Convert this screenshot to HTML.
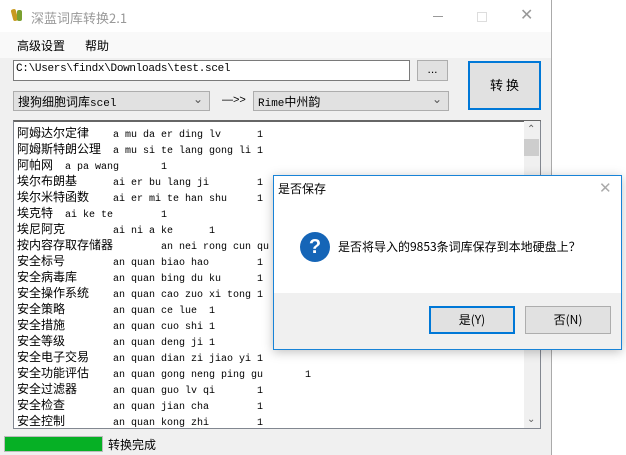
<!DOCTYPE html>
<html><head><meta charset="utf-8">
<style>
*{margin:0;padding:0;box-sizing:border-box}
body{width:626px;height:455px;position:relative;background:#fff;overflow:hidden;font-family:"Liberation Sans","Noto Sans CJK SC",sans-serif;font-size:12px;color:#000}
.win{position:absolute;left:0;top:0;width:552px;height:455px;background:#f0f0f0;border-right:1px solid #aaa}
.title{position:absolute;left:0;top:0;width:551px;height:32px;background:#fff}
.menu{position:absolute;left:0;top:32px;width:551px;height:26px;background:#f9f9f9}
.abs{position:absolute}
.cj{font-family:"Noto Sans CJK SC",sans-serif}
.clip{position:absolute;left:14px;top:122px;width:510px;height:306px;overflow:hidden}
.ln{position:absolute;left:3px;height:16px;font-family:"Liberation Mono",monospace;font-size:10px;line-height:16px;tab-size:8;-moz-tab-size:8;white-space:pre;margin-top:2px}
.ln b{font-weight:normal;font-family:"Noto Sans CJK SC",sans-serif;font-size:12px;line-height:12px}
</style></head><body>
<div class="win">
 <div class="title">
  <div class="abs" style="left:12px;top:9px;width:5px;height:12px;background:#c89a20;border-radius:2px;transform:rotate(-15deg)"></div>
  <div class="abs" style="left:17px;top:10px;width:5px;height:11px;background:#7aa030;border-radius:2px"></div>
  <div class="abs cj" style="left:31px;top:8px;font-size:13px;color:#999">深蓝词库转换2.1</div>
  <div class="abs" style="left:433px;top:16px;width:10px;height:1px;background:#999"></div>
  <div class="abs" style="left:477px;top:12px;width:10px;height:10px;border:1px solid #ddd"></div>
  <div class="abs" style="left:520px;top:5px;font-size:16px;color:#999">✕</div>
 </div>
 <div class="menu">
  <div class="abs cj" style="left:17px;top:5px;font-size:12px">高级设置</div>
  <div class="abs cj" style="left:85px;top:5px;font-size:12px">帮助</div>
 </div>
 <div class="abs" style="left:13px;top:60px;width:397px;height:21px;background:#fff;border:1px solid #7a7a7a;font-family:'Liberation Mono',monospace;font-size:11px;padding:2px 2px;letter-spacing:-0.3px">C:\Users\findx\Downloads\test.scel</div>
 <div class="abs" style="left:417px;top:60px;width:31px;height:21px;background:#e1e1e1;border:1px solid #adadad;text-align:center;line-height:16px">...</div>
 <div class="abs cj" style="left:468px;top:61px;width:73px;height:49px;background:#e1e1e1;border:2px solid #0078d7;text-align:center;line-height:44px;font-size:13px">转 换</div>
 <div class="abs" style="left:13px;top:91px;width:197px;height:20px;background:#e1e1e1;border:1px solid #adadad;padding:1px 4px;font-size:12px"><span class="cj">搜狗细胞词库</span><span style="font-family:'Liberation Mono',monospace;font-size:11px">scel</span><span class="abs" style="right:6px;top:0;color:#555">⌄</span></div>
 <div class="abs" style="left:222px;top:94px;font-size:11px">—&gt;&gt;</div>
 <div class="abs" style="left:253px;top:91px;width:196px;height:20px;background:#e1e1e1;border:1px solid #adadad;padding:1px 4px"><span style="font-family:'Liberation Mono',monospace;font-size:11px">Rime</span><span class="cj">中州韵</span><span class="abs" style="right:6px;top:0;color:#555">⌄</span></div>
 <div class="abs" style="left:13px;top:120px;width:528px;height:309px;background:#fff;border:1px solid #828790;border-top:2px solid #666"></div>
 <div class="abs" style="left:524px;top:121px;width:16px;height:307px;background:#f0f0f0"></div>
 <div class="abs" style="left:524px;top:139px;width:15px;height:17px;background:#cdcdcd"></div>
 <div class="abs" style="left:527px;top:124px;font-size:10px;color:#606060">⌃</div>
 <div class="abs" style="left:527px;top:414px;font-size:10px;color:#606060">⌄</div>
 <div class="clip">
<div class="ln" style="top:3px"><b>阿姆达尔定律</b>	a mu da er ding lv	1</div>
<div class="ln" style="top:19px"><b>阿姆斯特朗公理</b>	a mu si te lang gong li	1</div>
<div class="ln" style="top:35px"><b>阿帕网</b>	a pa wang	1</div>
<div class="ln" style="top:51px"><b>埃尔布朗基</b>	ai er bu lang ji	1</div>
<div class="ln" style="top:67px"><b>埃尔米特函数</b>	ai er mi te han shu	1</div>
<div class="ln" style="top:83px"><b>埃克特</b>	ai ke te	1</div>
<div class="ln" style="top:99px"><b>埃尼阿克</b>	ai ni a ke	1</div>
<div class="ln" style="top:115px"><b>按内容存取存储器</b>	an nei rong cun qu</div>
<div class="ln" style="top:131px"><b>安全标号</b>	an quan biao hao	1</div>
<div class="ln" style="top:147px"><b>安全病毒库</b>	an quan bing du ku	1</div>
<div class="ln" style="top:163px"><b>安全操作系统</b>	an quan cao zuo xi tong 1</div>
<div class="ln" style="top:179px"><b>安全策略</b>	an quan ce lue  1</div>
<div class="ln" style="top:195px"><b>安全措施</b>	an quan cuo shi 1</div>
<div class="ln" style="top:211px"><b>安全等级</b>	an quan deng ji 1</div>
<div class="ln" style="top:227px"><b>安全电子交易</b>	an quan dian zi jiao yi 1</div>
<div class="ln" style="top:243px"><b>安全功能评估</b>	an quan gong neng ping gu	1</div>
<div class="ln" style="top:259px"><b>安全过滤器</b>	an quan guo lv qi	1</div>
<div class="ln" style="top:275px"><b>安全检查</b>	an quan jian cha	1</div>
<div class="ln" style="top:291px"><b>安全控制</b>	an quan kong zhi	1</div>
 </div>
 <div class="abs" style="left:4px;top:436px;width:99px;height:16px;border:1px solid #bcbcbc;background:#06b025"></div>
 <div class="abs cj" style="left:108px;top:436px;font-size:12px">转换完成</div>
</div>
<div class="abs" style="left:273px;top:175px;width:349px;height:175px;background:#f0f0f0;border:1px solid #1883d7;box-shadow:0 2px 10px rgba(0,0,0,.25)">
 <div class="abs" style="left:0;top:0;width:347px;height:117px;background:#fff"></div>
 <div class="abs cj" style="left:4px;top:4px;font-size:12px">是否保存</div>
 <div class="abs" style="left:325px;top:3px;font-size:15px;color:#aaa">✕</div>
 <div class="abs" style="left:26px;top:56px;width:30px;height:30px;border-radius:50%;background:#1565b7;color:#fff;text-align:center;font:bold 20px/30px 'Liberation Sans',sans-serif">?</div>
 <div class="abs cj" style="left:64px;top:62px;font-size:12px">是否将导入的9853条词库保存到本地硬盘上？</div>
 <div class="abs cj" style="left:155px;top:130px;width:86px;height:28px;border:2px solid #0078d7;background:#e1e1e1;text-align:center;line-height:24px">是(Y)</div>
 <div class="abs cj" style="left:251px;top:130px;width:86px;height:28px;border:1px solid #adadad;background:#e1e1e1;text-align:center;line-height:26px">否(N)</div>
</div>
</body></html>
